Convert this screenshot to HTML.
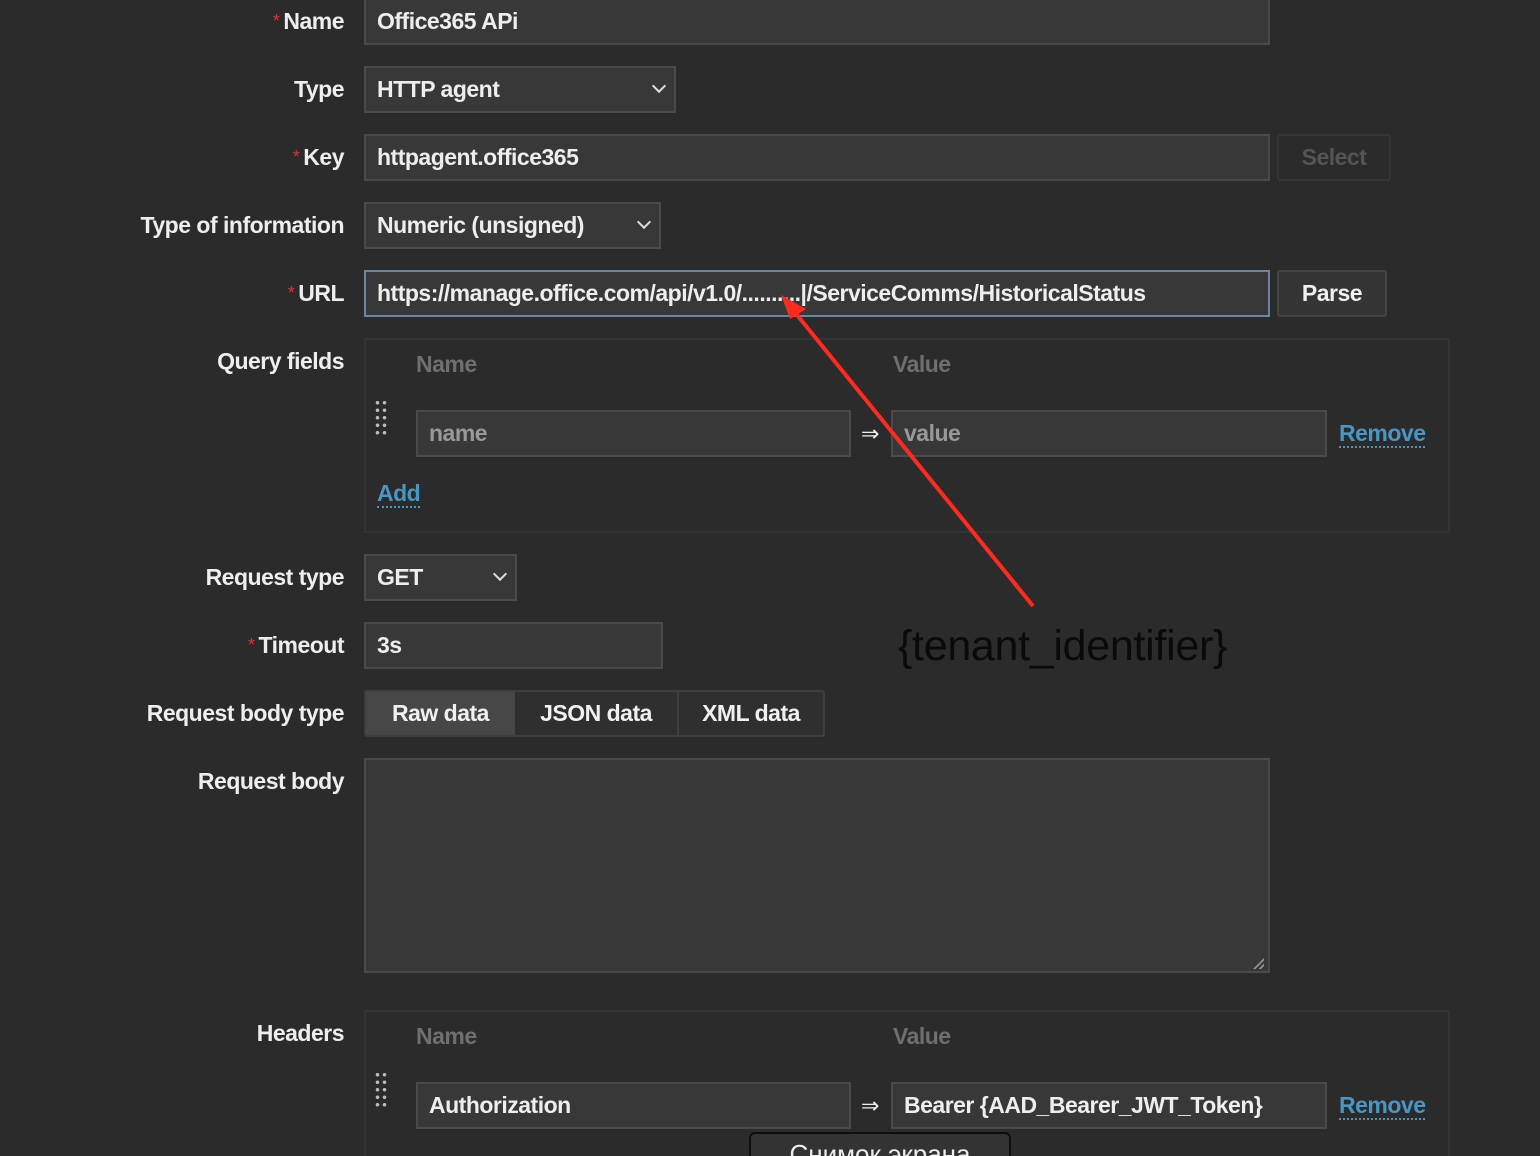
<!DOCTYPE html>
<html style="width:1540px;height:1156px;overflow:hidden"><head><meta charset="utf-8"><style>
*{box-sizing:border-box;margin:0;padding:0}
body{width:1540px;height:1156px;background:#2b2b2b;position:relative;overflow:hidden;font-family:"Liberation Sans",Arial,sans-serif;color:#f0f0f0}
.a{position:absolute}
.lbl{position:absolute;right:1196px;font-size:23px;font-weight:bold;letter-spacing:-0.5px;color:#eee;white-space:nowrap;line-height:28px}
.lbl .r{color:#d33;font-size:18px;vertical-align:top;margin-right:4px;font-weight:normal}
.in{position:absolute;background:#383838;border:2px solid #4a4a4a;font-size:23px;font-weight:bold;letter-spacing:-0.5px;line-height:43px;padding-left:11px;white-space:nowrap;overflow:hidden;color:#eee}
.ch{position:absolute;right:10px;top:13px;width:10px;height:10px;border-right:2px solid #ddd;border-bottom:2px solid #ddd;transform:rotate(45deg)}
.hd{position:absolute;font-size:23px;font-weight:bold;color:#6f6f6f;letter-spacing:-0.5px}
.lnk{position:absolute;font-size:23px;font-weight:bold;color:#4796c4;letter-spacing:-0.5px;border-bottom:2px dotted #4796c4;line-height:26px}
.box{position:absolute;border:2px solid #333;}
.drag{position:absolute;width:14px;height:38px;background-image:radial-gradient(circle,#bbb 1.6px,transparent 2px);background-size:7px 7.5px}
.arr{position:absolute;font-size:22px;color:#eee}
</style></head><body>

<div class="lbl" style="top:7px"><span class="r">*</span>Name</div>
<div class="in" style="left:364px;top:-2px;width:906px;height:47px">Office365 APi</div>

<div class="lbl" style="top:75px">Type</div>
<div class="in" style="left:364px;top:66px;width:312px;height:47px">HTTP agent<div class="ch"></div></div>

<div class="lbl" style="top:143px"><span class="r">*</span>Key</div>
<div class="in" style="left:364px;top:134px;width:906px;height:47px">httpagent.office365</div>
<div class="a" style="left:1277px;top:134px;width:114px;height:47px;border:2px solid #353535;border-radius:3px;color:#555;font-size:23px;font-weight:bold;line-height:43px;text-align:center;letter-spacing:-0.5px">Select</div>

<div class="lbl" style="top:211px">Type of information</div>
<div class="in" style="left:364px;top:202px;width:297px;height:47px">Numeric (unsigned)<div class="ch"></div></div>

<div class="lbl" style="top:279px"><span class="r">*</span>URL</div>
<div class="in" style="left:364px;top:270px;width:906px;height:47px;border-color:#6a86a6">https://manage.office.com/api/v1.0/..........|/ServiceComms/HistoricalStatus</div>
<div class="a" style="left:1277px;top:270px;width:110px;height:47px;border:2px solid #444;background:#353535;border-radius:3px;font-size:23px;font-weight:bold;line-height:43px;text-align:center;letter-spacing:-0.5px">Parse</div>

<div class="lbl" style="top:347px">Query fields</div>
<div class="box" style="left:364px;top:338px;width:1086px;height:195px"></div>
<div class="hd" style="left:416px;top:351px">Name</div>
<div class="hd" style="left:893px;top:351px">Value</div>
<div class="drag" style="left:374px;top:399px"></div>
<div class="in" style="left:416px;top:410px;width:435px;height:47px;color:#999">name</div>
<div class="arr" style="left:861px;top:421px">⇒</div>
<div class="in" style="left:891px;top:410px;width:436px;height:47px;color:#999">value</div>
<div class="lnk" style="left:1339px;top:420px">Remove</div>
<div class="lnk" style="left:377px;top:480px">Add</div>

<div class="lbl" style="top:563px">Request type</div>
<div class="in" style="left:364px;top:554px;width:153px;height:47px">GET<div class="ch"></div></div>

<div class="lbl" style="top:631px"><span class="r">*</span>Timeout</div>
<div class="in" style="left:364px;top:622px;width:299px;height:47px">3s</div>

<div class="lbl" style="top:699px">Request body type</div>
<div class="a" style="left:364px;top:690px;width:461px;height:47px;border:2px solid #3e3e3e;border-radius:3px;background:#2f2f2f;display:flex;font-size:23px;font-weight:bold;letter-spacing:-0.5px;line-height:43px">
<div style="width:149px;text-align:center;background:#474747">Raw data</div>
<div style="width:164px;text-align:center;border-right:2px solid #3e3e3e">JSON data</div>
<div style="flex:1;text-align:center">XML data</div></div>

<div class="lbl" style="top:767px">Request body</div>
<div class="in" style="left:364px;top:758px;width:906px;height:215px"></div>
<div class="a" style="left:1250px;top:955px;width:14px;height:14px;background:linear-gradient(135deg,transparent 60%,#999 62%,#999 68%,transparent 70%,transparent 80%,#999 82%,#999 88%,transparent 90%)"></div>

<div class="lbl" style="top:1019px">Headers</div>
<div class="box" style="left:364px;top:1010px;width:1086px;height:146px;border-bottom:none"></div>
<div class="hd" style="left:416px;top:1023px">Name</div>
<div class="hd" style="left:893px;top:1023px">Value</div>
<div class="drag" style="left:374px;top:1071px"></div>
<div class="in" style="left:416px;top:1082px;width:435px;height:47px">Authorization</div>
<div class="arr" style="left:861px;top:1093px">⇒</div>
<div class="in" style="left:891px;top:1082px;width:436px;height:47px">Bearer {AAD_Bearer_JWT_Token}</div>
<div class="lnk" style="left:1339px;top:1092px">Remove</div>

<div class="a" style="left:749px;top:1132px;width:262px;height:24px;overflow:hidden;background:#333;border:2px solid #0e0e0e;border-bottom:none;border-radius:6px 6px 0 0;font-size:26px;color:#eee;text-align:center;line-height:36px;padding-top:2px">Снимок экрана</div>

<svg class="a" style="left:0;top:0" width="1540" height="1156">
<line x1="1033" y1="606" x2="793" y2="310" stroke="#ff2a20" stroke-width="4"/>
<polygon points="781,295 806,309 790,319" fill="#ff2a20"/>
</svg>
<div class="a" style="left:898px;top:622px;font-size:43px;color:#0a0a0a;letter-spacing:-0.3px">{tenant_identifier}</div>
</body></html>
